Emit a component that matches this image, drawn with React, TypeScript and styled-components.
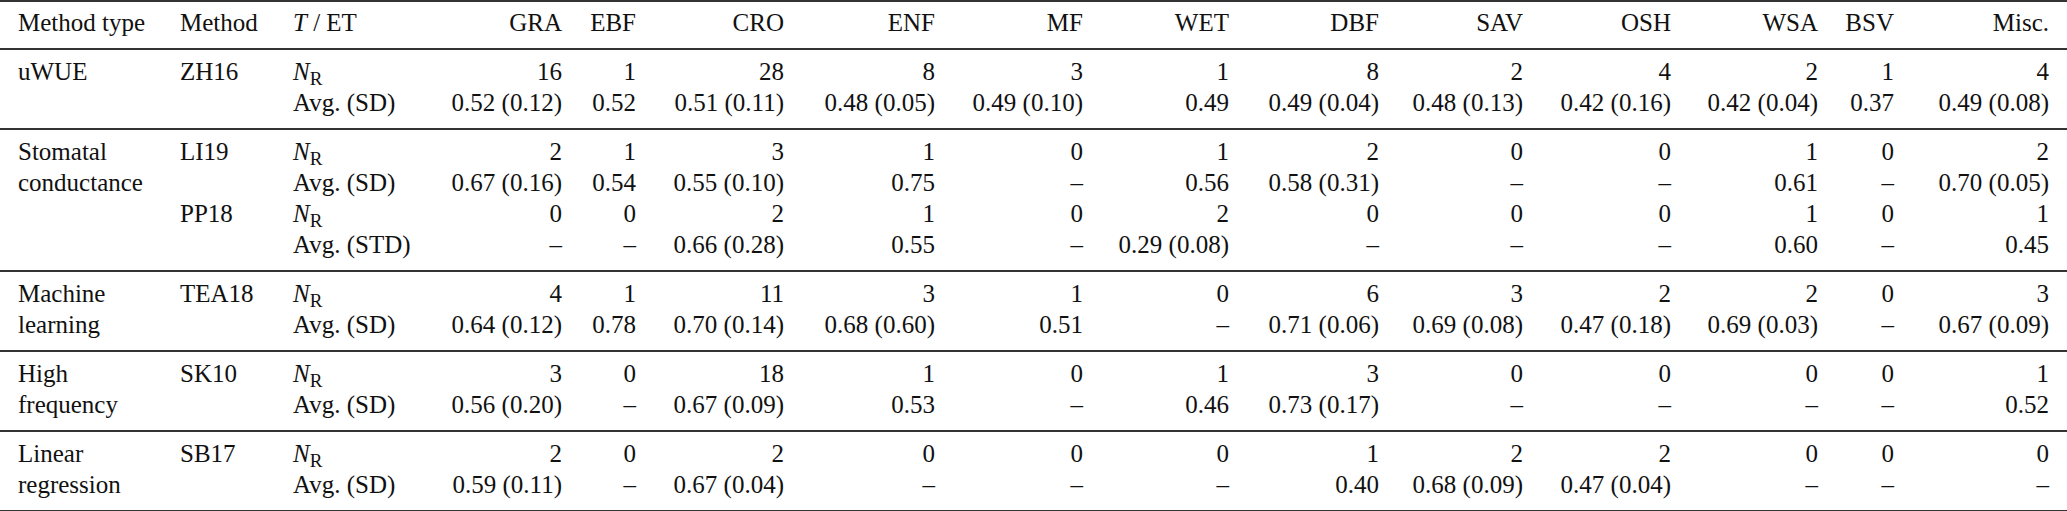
import React from "react";
import styled, { createGlobalStyle } from "styled-components";

const GlobalStyle = createGlobalStyle`
  html, body {
    margin: 0;
    padding: 0;
    background: #ffffff;
  }
`;

// column widths taken from the right edges of the printed table
const COLS = "167px 113px 140px 155px 74px 148px 151px 148px 146px 150px 144px 148px 147px 76px 160px";

const SERIF = `"Liberation Serif", Tinos, "Times New Roman", Times, "DejaVu Serif", serif`;

const Table = styled.div`
  width: 2067px;
  font-family: ${SERIF};
  font-size: 25px;
  color: #111;
  border-top: 2px solid #333;
`;

const HeaderRow = styled.div`
  display: grid;
  grid-template-columns: ${COLS};
  grid-auto-rows: 31px;
  line-height: 31px;
  padding: 5px 0 10px;
  border-bottom: 2px solid #333;
`;

const Group = styled.div`
  display: grid;
  grid-template-columns: ${COLS};
  grid-auto-rows: 31px;
  line-height: 31px;
  padding: 6px 0 10px;
  border-bottom: 2px solid #333;
`;

const TypeCell = styled.div<{ $lines: number }>`
  grid-column: 1;
  grid-row: 1 / span ${(p) => p.$lines};
  padding: 0 13px 0 18px;
  font-family: ${SERIF};
`;

const MethodCell = styled.div<{ $start: number; $span: number }>`
  grid-column: 2;
  grid-row: ${(p) => p.$start} / span ${(p) => p.$span};
  padding: 0 13px;
  font-family: ${SERIF};
`;

const LabelCell = styled.div`
  grid-column: 3;
  padding: 0 13px;
  white-space: nowrap;
  font-family: ${SERIF};
`;

const ValueCell = styled.div<{ $last?: boolean }>`
  text-align: right;
  white-space: nowrap;
  padding: 0 ${(p) => (p.$last ? 18 : 13)}px 0 0;
  font-family: ${SERIF};
`;

const Italic = styled.i`
  font-style: italic;
  font-family: ${SERIF};
`;

const Sub = styled.sub`
  font-size: 19px;
  line-height: 0;
  vertical-align: -5px;
  font-family: ${SERIF};
`;

const COVER = ["GRA", "EBF", "CRO", "ENF", "MF", "WET", "DBF", "SAV", "OSH", "WSA", "BSV", "Misc."];

type Method = {
  name: string;
  avgLabel: string;
  counts: string[];
  avgs: string[];
};

type MethodGroup = {
  type: string;
  methods: Method[];
};

const D = "–";

const groups: MethodGroup[] = [
  {
    type: "uWUE",
    methods: [
      {
        name: "ZH16",
        avgLabel: "Avg. (SD)",
        counts: ["16", "1", "28", "8", "3", "1", "8", "2", "4", "2", "1", "4"],
        avgs: ["0.52 (0.12)", "0.52", "0.51 (0.11)", "0.48 (0.05)", "0.49 (0.10)", "0.49", "0.49 (0.04)", "0.48 (0.13)", "0.42 (0.16)", "0.42 (0.04)", "0.37", "0.49 (0.08)"],
      },
    ],
  },
  {
    type: "Stomatal conductance",
    methods: [
      {
        name: "LI19",
        avgLabel: "Avg. (SD)",
        counts: ["2", "1", "3", "1", "0", "1", "2", "0", "0", "1", "0", "2"],
        avgs: ["0.67 (0.16)", "0.54", "0.55 (0.10)", "0.75", D, "0.56", "0.58 (0.31)", D, D, "0.61", D, "0.70 (0.05)"],
      },
      {
        name: "PP18",
        avgLabel: "Avg. (STD)",
        counts: ["0", "0", "2", "1", "0", "2", "0", "0", "0", "1", "0", "1"],
        avgs: [D, D, "0.66 (0.28)", "0.55", D, "0.29 (0.08)", D, D, D, "0.60", D, "0.45"],
      },
    ],
  },
  {
    type: "Machine learning",
    methods: [
      {
        name: "TEA18",
        avgLabel: "Avg. (SD)",
        counts: ["4", "1", "11", "3", "1", "0", "6", "3", "2", "2", "0", "3"],
        avgs: ["0.64 (0.12)", "0.78", "0.70 (0.14)", "0.68 (0.60)", "0.51", D, "0.71 (0.06)", "0.69 (0.08)", "0.47 (0.18)", "0.69 (0.03)", D, "0.67 (0.09)"],
      },
    ],
  },
  {
    type: "High frequency",
    methods: [
      {
        name: "SK10",
        avgLabel: "Avg. (SD)",
        counts: ["3", "0", "18", "1", "0", "1", "3", "0", "0", "0", "0", "1"],
        avgs: ["0.56 (0.20)", D, "0.67 (0.09)", "0.53", D, "0.46", "0.73 (0.17)", D, D, D, D, "0.52"],
      },
    ],
  },
  {
    type: "Linear regression",
    methods: [
      {
        name: "SB17",
        avgLabel: "Avg. (SD)",
        counts: ["2", "0", "2", "0", "0", "0", "1", "2", "2", "0", "0", "0"],
        avgs: ["0.59 (0.11)", D, "0.67 (0.04)", D, D, D, "0.40", "0.68 (0.09)", "0.47 (0.04)", D, D, D],
      },
    ],
  },
];

const Values = ({ items }: { items: string[] }) => (
  <>
    {items.map((v, i) => (
      <ValueCell key={i} $last={i === items.length - 1}>
        {v}
      </ValueCell>
    ))}
  </>
);

const App = () => {
  return (
    <>
      <GlobalStyle />
      <Table>
        <HeaderRow>
          <TypeCell $lines={1}>Method type</TypeCell>
          <MethodCell $start={1} $span={1}>
            Method
          </MethodCell>
          <LabelCell>
            <Italic>T</Italic> / ET
          </LabelCell>
          <Values items={COVER} />
        </HeaderRow>

        {groups.map((g) => (
          <Group key={g.type}>
            <TypeCell $lines={g.methods.length * 2}>{g.type}</TypeCell>
            {g.methods.map((m, mi) => (
              <React.Fragment key={m.name}>
                <MethodCell $start={mi * 2 + 1} $span={2}>
                  {m.name}
                </MethodCell>
                <LabelCell>
                  <Italic>N</Italic>
                  <Sub>R</Sub>
                </LabelCell>
                <Values items={m.counts} />
                <LabelCell>{m.avgLabel}</LabelCell>
                <Values items={m.avgs} />
              </React.Fragment>
            ))}
          </Group>
        ))}
      </Table>
    </>
  );
};

export default App;
